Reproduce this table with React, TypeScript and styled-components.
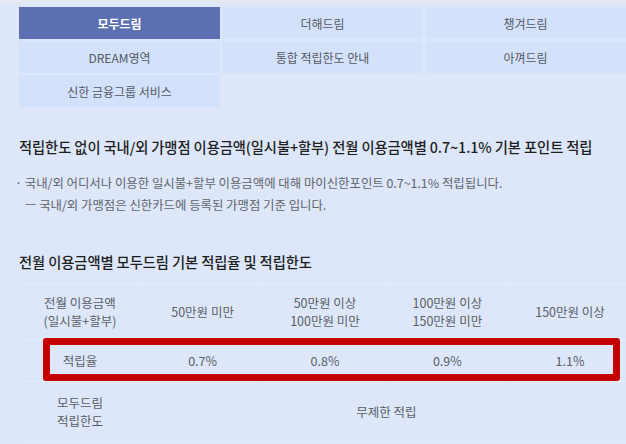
import React from "react"
import styled, { createGlobalStyle } from "styled-components"

const GlobalStyle = createGlobalStyle`
  html, body {
    margin: 0;
    padding: 0;
    background: #dde7f9;
    overflow: hidden;
  }
  body {
    font-family: "Noto Sans CJK KR", "Noto Sans", sans-serif;
  }
`

const tabs = [
  "모두드림",
  "더해드림",
  "챙겨드림",
  "DREAM영역",
  "통합 적립한도 안내",
  "아껴드림",
  "신한 금융그룹 서비스",
]

const amounts = [
  ["50만원 미만"],
  ["50만원 이상", "100만원 미만"],
  ["100만원 이상", "150만원 미만"],
  ["150만원 이상"],
]

const rates = ["0.7%", "0.8%", "0.9%", "1.1%"]

export default function App() {
  return (
    <Root>
      <GlobalStyle />
      <TopStrip />
      <TabGrid>
        {tabs.map((t, i) => (
          <Tab key={t} $active={i === 0}>
            {t}
          </Tab>
        ))}
      </TabGrid>

      <Title>
        적립한도 없이 국내/외 가맹점 이용금액(일시불+할부) 전월 이용금액별
        0.7~1.1% 기본 포인트 적립
      </Title>
      <Notes>
        <li>
          · 국내/외 어디서나 이용한 일시불+할부 이용금액에 대해 마이신한포인트
          0.7~1.1% 적립됩니다.
        </li>
        <Sub>ㅡ 국내/외 가맹점은 신한카드에 등록된 가맹점 기준 입니다.</Sub>
      </Notes>

      <SubTitle>전월 이용금액별 모두드림 기본 적립율 및 적립한도</SubTitle>
      <TableWrap>
        <Table>
          <tbody>
            <Row $h={57}>
              <Cell>
                전월 이용금액
                <br />
                (일시불+할부)
              </Cell>
              {amounts.map((a) => (
                <Cell key={a.join()}>
                  {a.map((line, i) => (
                    <React.Fragment key={line}>
                      {i > 0 && <br />}
                      {line}
                    </React.Fragment>
                  ))}
                </Cell>
              ))}
            </Row>
            <Row $h={41}>
              <Cell>적립율</Cell>
              {rates.map((r) => (
                <Cell key={r}>{r}</Cell>
              ))}
            </Row>
            <Row $h={60}>
              <Cell>
                모두드림
                <br />
                적립한도
              </Cell>
              <Cell colSpan={4}>무제한 적립</Cell>
            </Row>
          </tbody>
        </Table>
        <Highlight />
      </TableWrap>
    </Root>
  )
}

const Root = styled.div`
  width: 626px;
  height: 444px;
  overflow: hidden;
`

const TopStrip = styled.div`
  height: 3px;
  background: #e5eaf2;
`

const TabGrid = styled.div`
  display: grid;
  grid-template-columns: repeat(3, 201px);
  grid-auto-rows: 32px;
  gap: 2px;
  margin: 4px 0 0 19px;
`

const Tab = styled.div<{ $active?: boolean }>`
  display: flex;
  align-items: center;
  justify-content: center;
  font-size: 12px;
  color: ${(p) => (p.$active ? "#fff" : "#555a63")};
  font-weight: ${(p) => (p.$active ? 700 : 400)};
  background: ${(p) => (p.$active ? "#5b6fb1" : "#d3e1fa")};
`

const Title = styled.h3`
  margin: 30px 0 0 19px;
  font-size: 14.3px;
  line-height: 20px;
  font-weight: 500;
  color: #1e1e1e;
  letter-spacing: -0.1px;
  white-space: nowrap;
`

const Notes = styled.ul`
  list-style: none;
  margin: 15px 0 0 15px;
  padding: 0;
  font-size: 12.4px;
  line-height: 22px;
  color: #60646b;
  white-space: nowrap;
`

const Sub = styled.li`
  padding-left: 10px;
`

const SubTitle = styled.h4`
  margin: 36px 0 0 19px;
  font-size: 14.3px;
  line-height: 20px;
  font-weight: 500;
  color: #1e1e1e;
  letter-spacing: -0.1px;
`

const TableWrap = styled.div`
  position: relative;
  margin: 11px 0 0 19px;
  width: 612px;
`

const Table = styled.table`
  width: 612px;
  border-collapse: collapse;
  table-layout: fixed;
  border-top: 1px solid #e8eefb;
`

const Row = styled.tr<{ $h: number }>`
  height: ${(p) => p.$h}px;
  border-bottom: 1px solid #e8eefb;
`

const Cell = styled.td`
  padding: 0;
  text-align: center;
  vertical-align: middle;
  font-size: 12.5px;
  line-height: 18px;
  color: #5a5e66;
  border-left: 1px solid #e3eafa;
  &:first-child {
    border-left: none;
  }
`

const Highlight = styled.div`
  position: absolute;
  left: 24px;
  top: 55px;
  width: 577px;
  height: 43px;
  box-sizing: border-box;
  border: 7px solid #c50000;
  border-radius: 3px;
  pointer-events: none;
`
